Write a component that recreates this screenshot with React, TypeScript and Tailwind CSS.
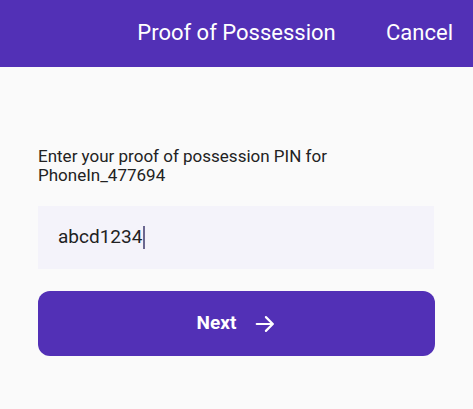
import React from "react";

export default function App() {
  return (
    <div className="w-[473px] h-[409px] bg-[#fafafa] overflow-hidden" style={{ fontFamily: "Roboto, 'Liberation Sans', sans-serif" }}>
      <div className="h-[67px] bg-[#5230b6] grid grid-cols-[1fr_auto_1fr] items-center text-white text-[22px]">
        <div />
        <div className="pb-[2px]">Proof of Possession</div>
        <div className="flex justify-end pr-[20px] pb-[2px]">Cancel</div>
      </div>
      <div className="px-[38px] pt-[80px]">
        <p className="text-[17px] leading-[19px] text-[#222222] pr-[60px]">
          Enter your proof of possession PIN for PhoneIn_477694
        </p>
        <div className="mt-[21px] h-[63px] w-[396px] bg-[#f4f3fa] flex items-center pl-[20px] text-[19px] text-[#222222]">
          <span>abcd1234</span>
          <span className="ml-[1px] w-[2px] h-[23px] bg-[#6b6790]" />
        </div>
        <button className="mt-[22px] h-[65px] w-[397px] rounded-[12px] bg-[#5230b6] flex items-center justify-center text-white text-[19px] font-bold">
          <span>Next</span>
          <svg className="ml-[18px]" width="22" height="22" viewBox="0 0 24 24" fill="none" stroke="white" strokeWidth="2.4" strokeLinecap="round" strokeLinejoin="round">
            <path d="M3 12h17" />
            <path d="M13 4.5l7.5 7.5-7.5 7.5" />
          </svg>
        </button>
      </div>
    </div>
  );
}
